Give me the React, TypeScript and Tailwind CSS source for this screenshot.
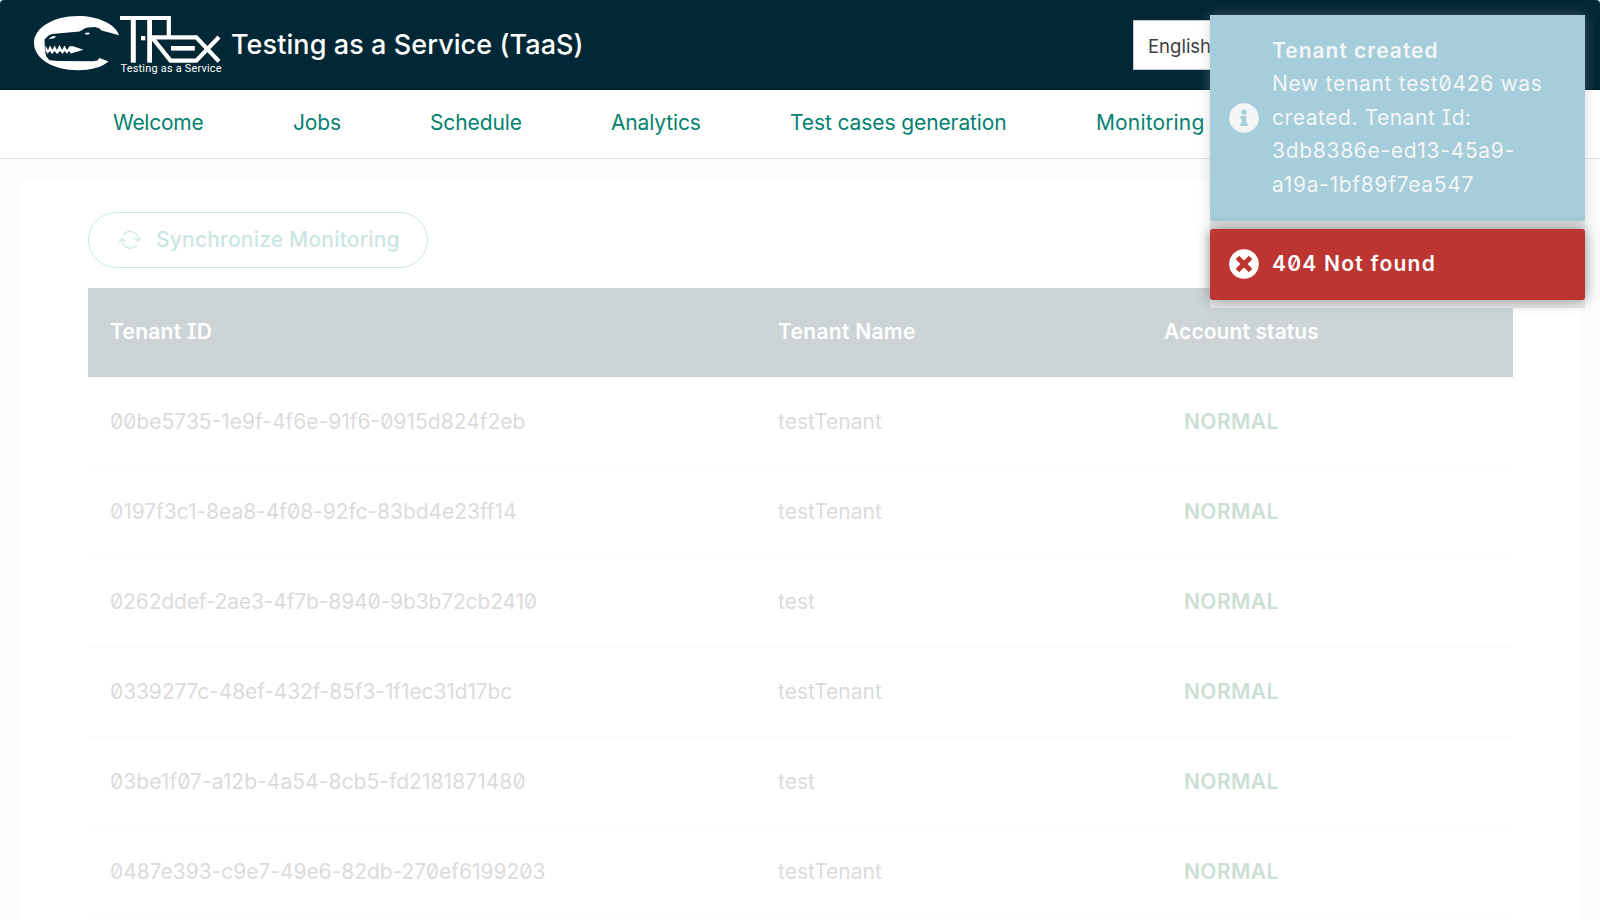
const tenants = [
  { id: '00be5735-1e9f-4f6e-91f6-0915d824f2eb', name: 'testTenant', tracking: '' },
  { id: '0197f3c1-8ea8-4f08-92fc-83bd4e23ff14', name: 'testTenant', tracking: 'tracking-[-0.05px]' },
  { id: '0262ddef-2ae3-4f7b-8940-9b3b72cb2410', name: 'test', tracking: 'tracking-[-0.15px]' },
  { id: '0339277c-48ef-432f-85f3-1f1ec31d17bc', name: 'testTenant', tracking: 'tracking-[-0.12px]' },
  { id: '03be1f07-a12b-4a54-8cb5-fd2181871480', name: 'test', tracking: 'tracking-[0.05px]' },
  { id: '0487e393-c9e7-49e6-82db-270ef6199203', name: 'testTenant', tracking: 'tracking-[-0.03px]' },
];

const links = [
  { label: 'Welcome', style: 'w-[90px] tracking-[-0.25px]' },
  { label: 'Jobs', style: 'w-[47px] tracking-[-0.15px]' },
  { label: 'Schedule', style: 'w-[91px] tracking-[-0.1px]' },
  { label: 'Analytics', style: 'w-[89px] tracking-[-0.15px]' },
  { label: 'Test cases generation', style: 'w-[216px] tracking-[-0.1px]' },
  { label: 'Monitoring', style: 'w-[108px] tracking-[0.15px]' },
];

function Logo() {
  return (
    <svg className="h-[62px] w-[190px] shrink-0" viewBox="33 14 190 62" fill="#fff">
      <path
        fillRule="evenodd"
        d="M119 35.2 C115.5 24 98 16 78 16 C53 16 34 28 34 43 C34 58.5 53 70.2 78 70.2 C91 70.2 101 67.5 108.6 61.5 L99.5 58 L97.5 60.5 L93 61.2 L58 61 L49.5 60.3 L46.3 56.5 L45 51 L44.5 39.5 L48.5 35.5 L52 34 L79.5 31.5 L86 27.8 L95 27 L99.5 28.5 L101.5 30.5 L111 33 Z"
      />
      <path d="M48.3 39.3 L52.3 36.3 L56.3 36.3 L54 38.2 Z" />
      <path d="M84.5 33 L88.5 32.5 L90 34 L86.5 34.8 Z" />
      <path d="M45.5 45.5 L48 50 L50 45.5 L52.5 50 L54.5 45.5 L57 50 L59.5 44.8 L62 50 L64.5 45.5 L67 50 L69.5 46.3 L73 46.3 L83.5 49.7 L71 53.4 L69 51 L67 53.7 L64.5 51 L62.5 54 L60 51 L57 54 L54.5 51 L52 54.2 L50 51 L47.5 53.8 L45.5 51 Z" />
      <g fill="none" stroke="#fff" strokeWidth="4.2">
        <path d="M120 18 H168.8 V37" />
        <path d="M133.3 18 V62.7" strokeWidth="5" />
        <path d="M149.6 18 V62.7" strokeWidth="4.8" />
        <path d="M150 37.3 H196.3 L219 61.4" />
        <path d="M152.5 38 L170.5 60.6 H196.3 L219 37" />
        <path d="M171 48.3 H194.8" strokeWidth="4.6" />
      </g>
      <rect x="141" y="36" width="4.3" height="4.3" />
      <text x="120.5" y="72" fontSize="10.9" fontFamily="Roboto, sans-serif" textLength="101" fill="#fff">
        Testing as a Service
      </text>
    </svg>
  );
}

function SyncIcon() {
  return (
    <svg className="h-[20px] w-[24px]" viewBox="0 0 24 20" fill="none" stroke="currentColor" strokeWidth="1.2" strokeLinecap="round" strokeLinejoin="round">
      <path d="M5.4 4.6 A8.3 8.3 0 0 1 20.2 10.2" />
      <path d="M18.8 15 A8.3 8.3 0 0 1 4 9.4" />
      <path d="M16.8 8.5 L20.2 11 L23.2 7.6" />
      <path d="M0.9 12.2 L4 8.8 L7.2 11.6" />
    </svg>
  );
}

function InfoIcon() {
  return (
    <svg className="size-[30px] shrink-0" viewBox="0 0 30 30">
      <circle cx="15" cy="15" r="14.8" fill="#f3f5f7" />
      <circle cx="15" cy="9.3" r="2.7" fill="#a6cdda" />
      <path d="M11.4 13.1 h5.8 v6.7 h1.4 v3.1 h-7.2 v-3.1 h1.5 v-3.6 h-1.5 z" fill="#a6cdda" />
    </svg>
  );
}

function ErrorIcon() {
  return (
    <svg className="size-[30px] shrink-0" viewBox="0 0 30 30">
      <circle cx="15" cy="15" r="14.8" fill="#fff" />
      <path d="M10.2 10.2 L19.8 19.8 M19.8 10.2 L10.2 19.8" stroke="#bc3530" strokeWidth="5" strokeLinecap="square" strokeLinejoin="round" />
    </svg>
  );
}

export default function App() {
  return (
    <div className="relative h-[920px] w-[1600px] overflow-hidden bg-[#fafdfc] font-['Inter','Noto_Sans',sans-serif] text-[21px] leading-[34px] [font-feature-settings:'zero','cv08']">
      <header className="flex h-[90px] items-start justify-between rounded-t-[4px] border-b border-[#001a28] bg-[#022836] pl-[33px]">
        <div className="flex pt-[14px]">
          <Logo />
          <h1 className="ml-[8px] pt-[14px] text-[27px] font-medium leading-[34px] tracking-[0.08px] text-white">Testing as a Service (TaaS)</h1>
        </div>
        <div className="mr-[67px] mt-[20px] flex h-[50px] w-[400px] items-center border border-[#c5c8d3] bg-white pl-[14px] pt-[2px] text-[18.5px] text-[#3c4043]">
          English
        </div>
      </header>

      <nav className="flex h-[69px] gap-[90px] border-b border-[#dce2e7] bg-white pl-[113px] pt-[16px] text-[#03816f]">
        {links.map((link) => (
          <a key={link.label} className={`whitespace-nowrap ${link.style}`}>
            {link.label}
          </a>
        ))}
      </nav>

      <main className="mx-[20px] mt-[20px] h-[800px] rounded-[8px] bg-white px-[68px] pt-[33px] shadow-[0_0_6px_rgba(0,0,0,0.025)]">
        <button className="flex h-[56px] w-[340px] items-center rounded-full border border-[#cde7e3] pb-px pl-[29px] font-medium tracking-[0.2px] text-[#cae6e2]">
          <SyncIcon />
          <span className="ml-[14px]">Synchronize Monitoring</span>
        </button>

        <div className="mt-[20px] w-[1425px]">
          <div className="flex h-[90px] items-center border-b border-[#f7faf9] bg-[#ccd4d5] pb-[2px] pl-[22px] font-semibold text-white">
            <div className="w-[668px] tracking-[0.25px]">Tenant ID</div>
            <div className="w-[386px] tracking-[0.3px]">Tenant Name</div>
            <div className="tracking-[0.1px]">Account status</div>
          </div>
          {tenants.map((tenant) => (
            <div key={tenant.id} className="flex h-[90px] items-center border-b border-[#f8f9f9] pb-[2px] pl-[22px] text-[#dadcdc]">
              <div className={`w-[668px] ${tenant.tracking}`}>{tenant.id}</div>
              <div className="w-[406px]">{tenant.name}</div>
              <div className="font-semibold tracking-[0.4px] text-[#ccdfd3]">NORMAL</div>
            </div>
          ))}
        </div>
      </main>

      <div className="absolute left-[1210px] top-[15px] flex w-[375px] flex-col gap-2 bg-[#e9eaec] pb-2">
        <div className="flex h-[206px] items-center rounded-[3px] bg-[#a6cdda] pl-[19px] leading-[33.6px] text-[#f3f5f7] shadow-[0_0_12px_rgba(153,153,153,0.4)]">
          <InfoIcon />
          <div className="ml-[13px] whitespace-nowrap pb-px tracking-[0.7px]">
            <div className="font-semibold tracking-[1px]">Tenant created</div>
            <div>New tenant test0426 was</div>
            <div className="tracking-[0.55px]">created. Tenant Id:</div>
            <div>3db8386e-ed13-45a9-</div>
            <div>a19a-1bf89f7ea547</div>
          </div>
        </div>
        <div className="flex h-[71px] items-center rounded-[3px] bg-[#bc3530] pb-px pl-[19px] text-white shadow-[0_0_14px_#888]">
          <ErrorIcon />
          <span className="ml-[13px] font-semibold tracking-[1.25px]">404 Not found</span>
        </div>
      </div>
    </div>
  );
}
